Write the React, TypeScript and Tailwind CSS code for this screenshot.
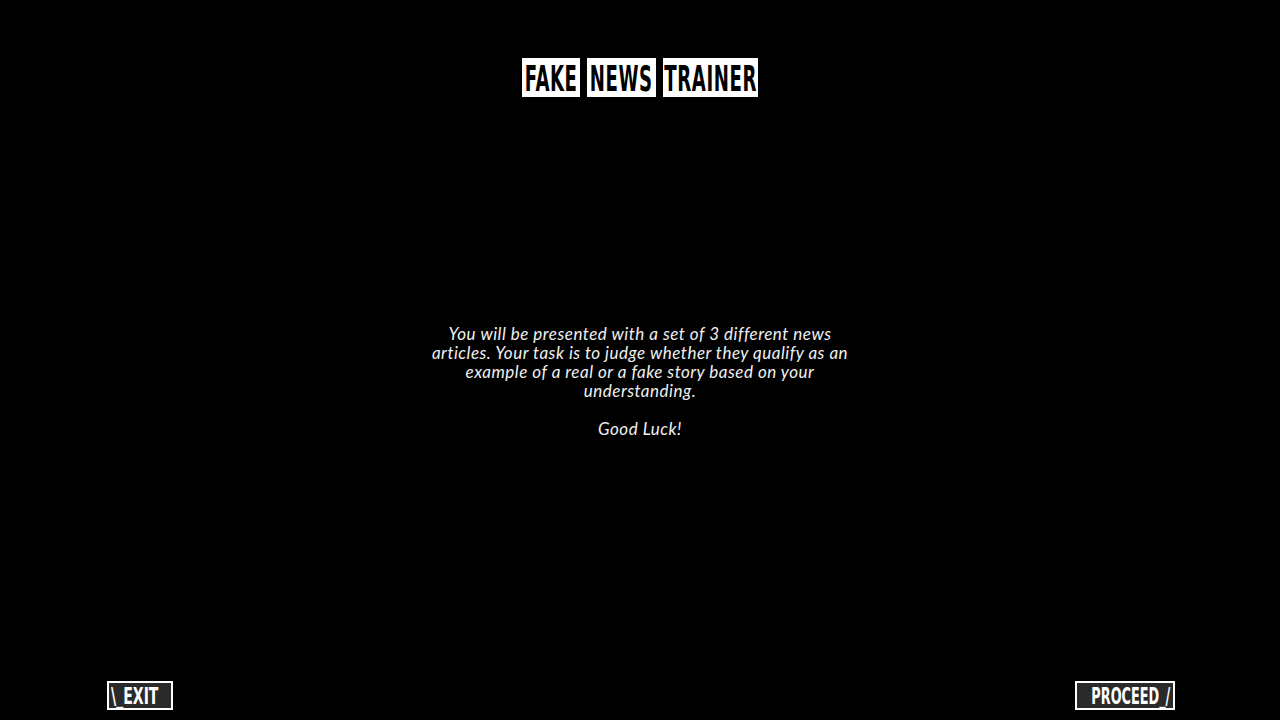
const condensed = { fontFamily: '"DejaVu Sans Condensed", "Liberation Sans", sans-serif' }

export default function App() {
  const titleWords = [
    { text: 'FAKE', w: 'w-[58px]' },
    { text: 'NEWS', w: 'w-[69px]' },
    { text: 'TRAINER', w: 'w-[95px]' },
  ]

  return (
    <div className="h-screen w-full bg-black text-white flex flex-col overflow-hidden">
      {/* title */}
      <div className="pt-[58px] flex justify-center gap-[7px]">
        {titleWords.map((word) => (
          <div
            key={word.text}
            className={`${word.w} h-[39px] bg-white flex items-center justify-center`}
          >
            <span
              className="inline-block whitespace-nowrap text-black font-bold text-[36px] leading-none scale-x-[0.56] tracking-[1px] mt-[2px]"
              style={condensed}
            >
              {word.text}
            </span>
          </div>
        ))}
      </div>

      {/* intro text */}
      <div className="flex-1 flex justify-center pt-[227px]">
        <p
          className="w-[430px] text-center italic text-[17px] tracking-[0.5px] leading-[19px] text-[#f0f0f0]"
          style={{ fontFamily: 'Lato, "Open Sans", sans-serif' }}
        >
          You will be presented with a set of 3 different news articles. Your task is to judge whether
          they qualify as an example of a real or a fake story based on your understanding.
          <br />
          <br />
          Good Luck!
        </p>
      </div>

      {/* bottom buttons */}
      <div className="flex justify-between px-[105px] pb-[10px]">
        <button className="ml-[2px] w-[66px] h-[29px] border-2 border-white bg-[#2a2a2a] flex items-center justify-start pl-[2px]">
          <span
            className="inline-block whitespace-nowrap text-white font-bold text-[23px] leading-[26px] scale-x-[0.68] origin-left"
            style={condensed}
          >
            \_EXIT
          </span>
        </button>
        <button className="w-[100px] h-[29px] border-2 border-white bg-[#2a2a2a] flex items-center justify-end pr-[3px]">
          <span
            className="inline-block whitespace-nowrap text-white font-bold text-[23px] leading-[26px] scale-x-[0.62] origin-right"
            style={condensed}
          >
            PROCEED_/
          </span>
        </button>
      </div>
    </div>
  )
}
